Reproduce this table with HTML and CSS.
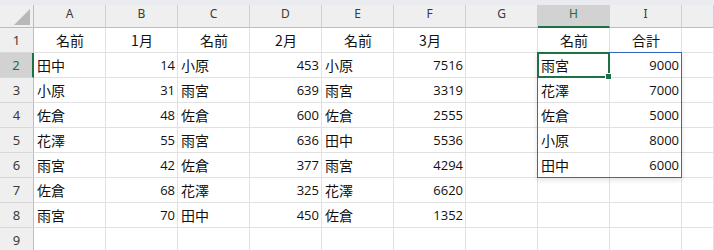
FILE: index.html
```html
<!DOCTYPE html>
<html lang="ja">

<head>
  <meta charset="UTF-8">
  <meta name="viewport" content="width=device-width, initial-scale=1.0">
  <title>Book1 - Sheet1</title>
  <link rel="stylesheet" href="styles.css">
</head>

<body>
  <div class="sheet" id="sheet"></div>

  <script>
    // ==============================================================
    // Sheet data
    // ==============================================================

    const columns = ['A', 'B', 'C', 'D', 'E', 'F', 'G', 'H', 'I'];
    const rows = [
      ['名前', '1月', '名前', '2月', '名前', '3月', '', '名前', '合計'],
      ['田中', 14, '小原', 453, '小原', 7516, '', '雨宮', 9000],
      ['小原', 31, '雨宮', 639, '雨宮', 3319, '', '花澤', 7000],
      ['佐倉', 48, '佐倉', 600, '佐倉', 2555, '', '佐倉', 5000],
      ['花澤', 55, '雨宮', 636, '田中', 5536, '', '小原', 8000],
      ['雨宮', 42, '佐倉', 377, '雨宮', 4294, '', '田中', 6000],
      ['佐倉', 68, '花澤', 325, '花澤', 6620],
      ['雨宮', 70, '田中', 450, '佐倉', 1352],
      []
    ];

    // active cell is H2
    const activeCol = 'H';
    const activeRow = 2;

    // ==============================================================
    // Build the grid
    // ==============================================================

    const sheet = document.getElementById('sheet');

    // every cell gets its own grid slot so the overlays can sit on top
    const addCell = (className, text, gridRow, gridCol) => {
      const cell = document.createElement('div');
      cell.className = className;
      cell.textContent = text;
      if (gridRow) {
        cell.style.gridArea = `${gridRow} / ${gridCol}`;
      }
      sheet.appendChild(cell);
      return cell;
    }

    addCell('corner', '', 1, 1);
    columns.forEach((col, j) => {
      addCell(col === activeCol ? 'col-head active' : 'col-head', col, 1, j + 2);
    });
    addCell('col-head', '', 1, columns.length + 2);

    rows.forEach((values, i) => {
      const rowNum = i + 1;
      addCell(rowNum === activeRow ? 'row-head active' : 'row-head', rowNum, rowNum + 1, 1);
      columns.forEach((col, j) => {
        const value = values[j] ?? '';
        let className = 'cell';
        if (rowNum === 1) {
          className += ' title';
        } else if (typeof value === 'number') {
          className += ' num';
        }
        addCell(className, value, rowNum + 1, j + 2);
      });
      addCell('cell', '', rowNum + 1, columns.length + 2);
    });

    // range outline H2:I6 and the active cell
    addCell('range', '');
    const selection = addCell('selection', '');
    const handle = document.createElement('span');
    handle.className = 'fill-handle';
    selection.appendChild(handle);
  </script>
</body>

</html>
```

FILE: styles.css
```css
body {
  margin: 0;
  background-color: #fff;
  font-family: 'Noto Sans CJK JP', sans-serif;
  overflow: hidden;
}

.sheet {
  display: grid;
  grid-template-columns: 34px repeat(9, 72px) 1fr;
  grid-template-rows: 23px repeat(9, 25px);
  border-top: 5px solid #e9ebee;
  color: #111;
}

.corner,
.col-head,
.row-head {
  background-color: #efefef;
  color: #3a3a3a;
  font-family: 'Noto Sans', sans-serif;
  font-size: 12px;
  box-sizing: border-box;
}

.corner {
  position: relative;
  border-right: 1px solid #bdbdbd;
  border-bottom: 1px solid #bdbdbd;
}

/* little select-all triangle */
.corner::after {
  content: '';
  position: absolute;
  right: 3px;
  bottom: 2px;
  border-style: solid;
  border-width: 0 0 16px 16px;
  border-color: transparent transparent #b8b8b8 transparent;
}

.col-head {
  display: flex;
  justify-content: center;
  align-items: center;
  padding-bottom: 5px;
  border-right: 1px solid #d0d0d0;
  border-bottom: 1px solid #bdbdbd;
}

.row-head {
  display: flex;
  justify-content: center;
  align-items: center;
  border-right: 1px solid #bdbdbd;
  border-bottom: 1px solid #d8d8d8;
  font-size: 13px;
}

.col-head.active {
  background-color: #d2d2d2;
  color: #1e6e42;
  border-bottom: 2px solid #1e7145;
}

.row-head.active {
  background-color: #d2d2d2;
  color: #1e6e42;
  border-right: 2px solid #1e7145;
}

.cell {
  display: flex;
  align-items: center;
  padding: 0 2px 0 3px;
  border-right: 1px solid #e1e1e1;
  border-bottom: 1px solid #e1e1e1;
  box-sizing: border-box;
  font-size: 14px;
  white-space: nowrap;
}

.cell.title {
  justify-content: center;
}

.cell.num {
  justify-content: flex-end;
  font-family: 'Open Sans', sans-serif;
  font-size: 13px;
}

.range {
  grid-column: 9 / 11;
  grid-row: 3 / 8;
  margin: -1px 0 0 -1px;
  border: 1px solid #3568c4;
  box-shadow: 0 2px 5px rgba(0, 0, 0, 0.12);
  pointer-events: none;
}

.selection {
  grid-column: 9 / 10;
  grid-row: 3 / 4;
  position: relative;
  margin: -1px 0 0 -1px;
  border: 2px solid #1e7145;
  pointer-events: none;
}

.fill-handle {
  position: absolute;
  right: -4px;
  bottom: -4px;
  width: 5px;
  height: 5px;
  background-color: #1e7145;
  border: 1px solid #fff;
}
```
